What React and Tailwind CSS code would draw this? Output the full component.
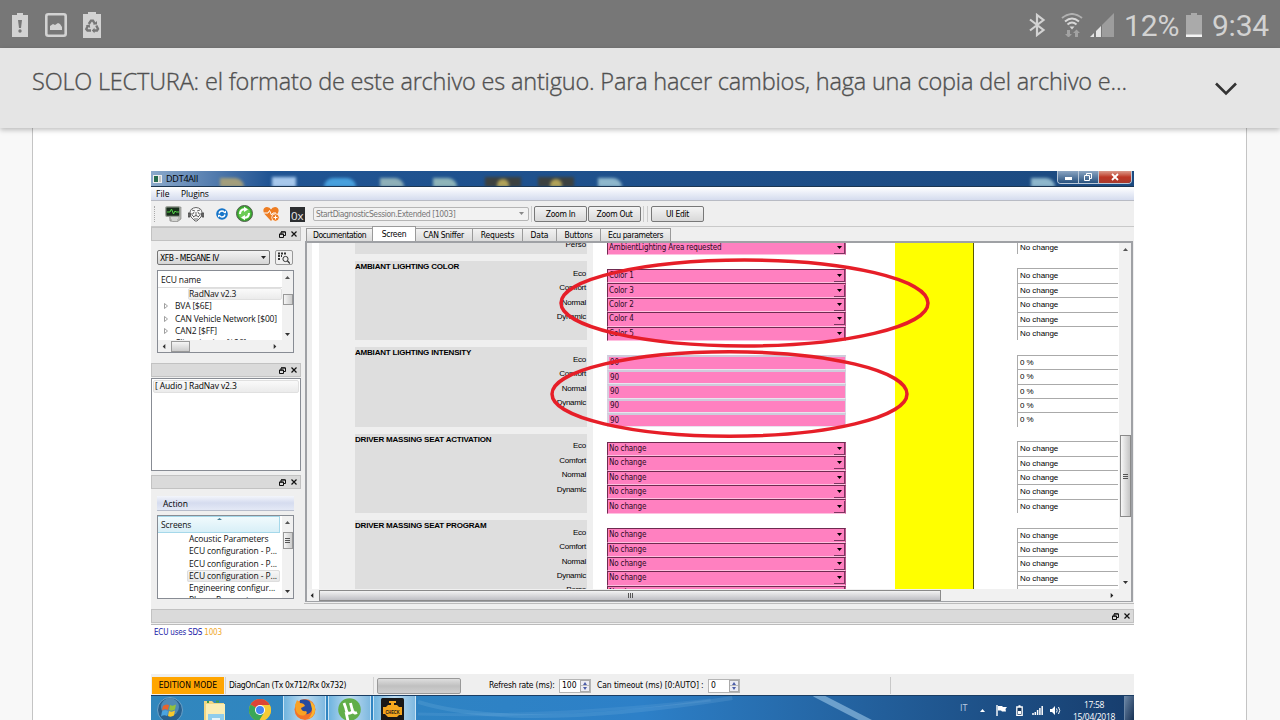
import clsx from 'clsx';

const TAHOMA = "font-['DejaVu_Sans_Condensed','DejaVu_Sans',sans-serif]";
const SEGOE = "font-['Open_Sans','Noto_Sans',sans-serif]";
const ARIAL = "font-['Liberation_Sans',Arial,sans-serif]";

const tabs = [
  { name: 'Documentation', box: 'w-[65px]', text: 'tracking-[-0.450px] pr-[2px]' },
  { name: 'Screen', box: 'w-[42px]', text: 'tracking-[-0.3px] pr-[2px]', active: true },
  { name: 'CAN Sniffer', box: 'w-[55px]', text: 'tracking-[-0.3px] pr-[3px]' },
  { name: 'Requests', box: 'w-[49px]', text: 'tracking-[-0.2px] pr-[2px]' },
  { name: 'Data', box: 'w-[33px]', text: 'tracking-[-0.1px] pr-[2px]' },
  { name: 'Buttons', box: 'w-[43px]', text: 'tracking-[-0.2px] pr-[2px]' },
  { name: 'Ecu parameters', box: 'w-[69px]', text: 'tracking-[-0.4px] pr-[2px]' },
];

const modes = ['Eco', 'Comfort', 'Normal', 'Dynamic'];

const groups = [
  {
    title: 'AMBIANT LIGHTING COLOR',
    combo: true,
    values: ['Color 1', 'Color 3', 'Color 2', 'Color 4', 'Color 5'],
    current: 'No change',
  },
  {
    title: 'AMBIANT LIGHTING INTENSITY',
    values: ['90', '90', '90', '90', '90'],
    current: '0 %',
  },
  {
    title: 'DRIVER MASSING SEAT ACTIVATION',
    combo: true,
    values: Array(5).fill('No change'),
    current: 'No change',
  },
  {
    title: 'DRIVER MASSING SEAT PROGRAM',
    combo: true,
    values: Array(5).fill('No change'),
    current: 'No change',
    extra: 'Perso',
  },
];

const ecus = ['BVA [$6E]', 'CAN Vehicle Network [$00]', 'CAN2 [$FF]', 'Climatisation [$26]'];

const screens = [
  'Acoustic Parameters',
  'ECU configuration - P...',
  'ECU configuration - P...',
  'ECU configuration - P...',
  'Engineering configur...',
  'Phone Parameters',
];

function Arrow({ dir = 'down', className = 'w-[5px] h-[3px] text-[#222]' }) {
  const d = {
    down: 'M0 0H6L3 4Z',
    up: 'M0 4H6L3 0Z',
    left: 'M5 0V4L1 2Z',
    right: 'M1 0V4L5 2Z',
  }[dir];
  return (
    <svg viewBox="0 0 6 4" preserveAspectRatio="none" className={clsx('shrink-0', className)}>
      <path d={d} fill="currentColor" />
    </svg>
  );
}

function StatusBar() {
  return (
    <div className="h-12 shrink-0 bg-[#777] flex items-center text-[#d2d2d2]">
      <svg className="ml-3 mt-[2px] w-4 h-6" viewBox="0 0 16 24">
        <path d="M5 0h6v2h5v22H0V2h5Z" fill="#d2d2d2" />
        <path d="M6 7h4l-1 8H7Z" fill="#777" />
        <circle cx="8" cy="18" r="1.7" fill="#777" />
      </svg>
      <svg className="ml-[17px] mt-[2px] w-[22px] h-6" viewBox="0 0 22 24">
        <rect x="1.3" y="1.3" width="19.4" height="21.4" rx="2" fill="none" stroke="#d2d2d2" strokeWidth="2.6" />
        <path d="M5 17v-4l3-2 2 1 3-2 2 1 2 3v3Z" fill="#d2d2d2" />
      </svg>
      <svg className="ml-4 mt-[2px] w-[18px] h-[26px]" viewBox="0 0 18 26">
        <path d="M5 0h8v2h5v24H0V2h5Z" fill="#d2d2d2" />
        <g fill="none" stroke="#777" strokeWidth="2.4">
          <path d="M5.8 12 8 8.6h2L12 12" />
          <path d="M13.3 13.5 15 17l-1 1.500h-3.500" />
          <path d="M8 18.500H4.500L3.300 17l1.700-3.500" />
        </g>
        <path d="M10 12.500h4V9ZM11.500 15.700v5.500L8.800 18.500ZM2.700 13.200l4-.8.500 3.500Z" fill="#777" />
      </svg>
      <div className="ml-auto flex items-center pr-[11px]">
        <svg className="mt-[2px] w-[18px] h-6" viewBox="0 0 18 24" fill="none" stroke="#d2d2d2" strokeWidth="2.200">
          <path d="M2 6.500 15.500 17 9 22V2l6.500 5L2 17.500" />
        </svg>
        <svg className="ml-[15px] mt-[2px] w-[22px] h-6" viewBox="0 0 22 24" fill="none" strokeWidth="2">
          <path d="M1 5Q11-3 21 5" stroke="#b0b0b0" />
          <path d="M4 8.500Q11 2.500 18 8.500" stroke="#d8d8d8" />
          <path d="M6.500 11.500Q11 7.500 15.500 11.500" stroke="#d8d8d8" />
          <path d="M8.500 13.500h5L11 16.500Z" fill="#d8d8d8" stroke="none" />
          <path d="M6 17h3v4h2l-3.500 3.500L4 21h2ZM14 24h3v-4h2l-3.500-3.500L12 20h2Z" fill="#a2a2a2" stroke="none" />
        </svg>
        <svg className="ml-[7px] mt-[2px] w-6 h-6" viewBox="0 0 24 24">
          <path d="M24 0v24H12V12Z" fill="#9d9d9d" />
          <path d="M0 24h4v-4ZM6 24h5V13L6 18Z" fill="#e4e4e4" />
        </svg>
        <span className="ml-[10px] w-[56px] font-[Roboto,sans-serif] text-[30px] leading-[48px] tracking-[-0.1px] whitespace-nowrap mt-1">
          12%
        </span>
        <svg className="ml-[6px] mt-[2px] w-4 h-6" viewBox="0 0 16 24">
          <path d="M5 0h6v2h5v22H0V2h5Z" fill="#aaa" />
          <path d="M0 21.500h16V24H0Z" fill="#f4f4f4" />
        </svg>
        <span className="ml-[10px] font-[Roboto,sans-serif] text-[30px] leading-[48px] tracking-[-0.2px] mt-1">9:34</span>
      </div>
    </div>
  );
}

function Banner() {
  return (
    <div className="relative z-10 h-20 shrink-0 bg-[#e5e5e5] shadow-[0_2px_5px_rgba(0,0,0,0.25)] flex">
      <p className="ml-8 mt-4 w-[1100px] font-['Open_Sans','Noto_Sans',sans-serif] font-light text-[23.500px] leading-[34px] tracking-[-0.185px] text-[#505050] [-webkit-text-stroke:0.35px_#505050] whitespace-nowrap">
        SOLO LECTURA: el formato de este archivo es antiguo. Para hacer cambios, haga una copia del archivo e...
      </p>
      <svg className="ml-[82px] mt-[33px] w-6 h-4" viewBox="0 0 24 16" fill="none" stroke="#333" strokeWidth="2.600">
        <path d="m2 2.500 10 10 10-10" />
      </svg>
    </div>
  );
}

function TitleBar() {
  return (
    <div className="h-[15px] shrink-0 overflow-hidden flex items-start bg-linear-to-r from-[#8ba9cb] via-[#205493] via-12% to-[#1c4a80]">
      <svg className="mt-1 ml-[2px] w-[9px] h-2 shrink-0" viewBox="0 0 9 8">
        <path d="M0 0h9v8H0Z" fill="#eee" />
        <path d="M1 1h4v6H1Z" fill="#256b4e" />
        <path d="M6 2h2M6 4h2M6 6h2" stroke="#999" />
      </svg>
      <span className={clsx(SEGOE, 'ml-1 mt-[2px] w-[60px] text-[9px] leading-3 tracking-[-0.2px] text-black')}>DDT4All</span>
      <div className="-ml-[6px] flex h-4 items-end blur-[1.500px]">
        <div className="w-6 h-[9px] bg-[#a39e7b] rounded-tr-xl" />
        <div className="ml-7 w-6 h-[10px] bg-[#a7c8ec]" />
        <div className="ml-7 w-8 h-[9px] rounded-t-full bg-[#48a0dd]" />
        <div className="ml-6 w-6 h-[9px] rounded-tr-xl bg-[#8eb0b9]" />
        <div className="ml-[29px] w-6 h-[9px] rounded-tr-xl bg-[#8eb4b9]" />
        <div className="ml-[28px] w-9 h-[10px] bg-[#3c4140] flex justify-center items-end">
          <div className="w-3 h-2 rounded-t-full bg-[#b1a257]" />
        </div>
        <div className="ml-[17px] w-9 h-[10px] bg-[#3c4140] flex justify-center items-end">
          <div className="w-3 h-2 rounded-t-full bg-[#b1a257]" />
        </div>
        <div className="ml-6 w-6 h-[9px] rounded-tr-xl bg-[#8eb7cc]" />
        <div className="ml-[409px] w-6 h-[9px] rounded-tr-xl bg-[#8eb7cc]" />
      </div>
      <div className="ml-auto mr-[2px] flex h-[13px] border border-t-0 border-[#b9c8d8] rounded-b-sm overflow-hidden">
        <div className="w-5 bg-linear-to-b from-[#8ba5c2] to-[#28527f] flex justify-center items-end pb-[3px]">
          <div className="w-[7px] h-[3px] bg-white" />
        </div>
        <div className="w-5 border-l border-[#b9c8d8] bg-linear-to-b from-[#8ba5c2] to-[#28527f] flex justify-center items-center">
          <svg className="w-[9px] h-[9px]" viewBox="0 0 9 9" fill="none" stroke="#fff">
            <path d="M.5 2.500h5v5h-5ZM2.500 2V.5h5v5H6" />
          </svg>
        </div>
        <div className="w-[33px] border-l border-[#b9c8d8] bg-linear-to-b from-[#d99a8c] via-[#bd3726] to-[#a93a2c] flex justify-center items-center">
          <svg className="w-2 h-2" viewBox="0 0 8 8" stroke="#fff" strokeWidth="1.800">
            <path d="m1 1 6 6M7 1 1 7" />
          </svg>
        </div>
      </div>
    </div>
  );
}

function MenuBar() {
  return (
    <div
      className={clsx(
        SEGOE,
        'h-[15px] shrink-0 flex items-center border-t border-t-[#1b3551] border-b border-b-[#b8bbc4] bg-linear-to-b from-white via-[#e9edf7] to-[#d5dcee] text-[8.500px] leading-3 text-black'
      )}
    >
      <span className="ml-[5px] w-[25px]">File</span>
      <span className="tracking-[-0.1px]">Plugins</span>
    </div>
  );
}

function ToolButton({ children, className }) {
  return (
    <div
      className={clsx(
        TAHOMA,
        'h-4 flex items-center justify-center rounded-[2px] border border-[#787878] bg-linear-to-b from-[#f4f4f4] to-[#d8d8d8] text-[8.500px] leading-3 tracking-[-0.3px] whitespace-nowrap',
        className
      )}
    >
      {children}
    </div>
  );
}

function Toolbar() {
  return (
    <div className="h-[26px] shrink-0 flex items-center bg-[#efefef] border-b border-[#c9c9c9]">
      <div className="ml-[3px] h-4 border-l border-dotted border-[#aaa]" />
      <svg className="ml-[10px] w-[17px] h-4 shrink-0" viewBox="0 0 17 16">
        <path d="M4 3 16 1v12l-4 3-7-1Z" fill="#b9bab5" stroke="#777" strokeWidth=".6" />
        <rect x=".8" y=".8" width="14" height="9.500" rx="1" fill="#182e1b" stroke="#9aa097" strokeWidth="1.200" />
        <path d="M2 6h3l1.500-3L8.500 8l1.500-3 1 1h3" fill="none" stroke="#55d548" />
        <path d="M6 12h7M7 14h5" stroke="#eee" />
      </svg>
      <svg className="ml-[6px] w-4 h-4 shrink-0" viewBox="0 0 16 16" fill="none" stroke="#444" strokeWidth=".8">
        <path d="M2 7Q2 2 8 1.500q6 .5 6 5.500l-1 4-4 4H7l-4-4Z" fill="#f8f8f8" />
        <path d="M1 8h4l1-2M15 8h-4l-1-2M4 4l3 1M12 4 9 5M5 11q3-3 6 0M6 13h4M8 6v4M4 9l2 2M12 9l-2 2" />
        <path d="M0 7h2v4H0ZM14 7h2v4h-2Z" fill="#777" />
      </svg>
      <svg className="ml-[12px] w-3 h-3 shrink-0" viewBox="0 0 12 12">
        <circle cx="6" cy="6" r="5.800" fill="#1675c9" />
        <path d="M3 5.500q.5-2.500 3-2.500 1.500 0 2.200 1M9 6.500Q8.500 9 6 9q-1.500 0-2.200-1" fill="none" stroke="#fff" strokeWidth="1.300" />
        <path d="m7 5 3 .3V2.500ZM5 7l-3-.3v2.800Z" fill="#fff" />
      </svg>
      <svg className="ml-2 w-[17px] h-[17px] shrink-0" viewBox="0 0 17 17">
        <circle cx="8.500" cy="8.500" r="8" fill="#39a72e" stroke="#555d52" />
        <circle cx="8.500" cy="8.500" r="6" fill="#6ccc55" />
        <path d="M4 9q0-4.500 4.500-4.800M13 8q0 4.500-4.500 4.800" fill="none" stroke="#fff" strokeWidth="2" />
        <path d="m8 1.800 4 2.600L8 7ZM9 10v5.200l-4-2.600Z" fill="#fff" />
      </svg>
      <svg className="ml-[10px] w-[17px] h-4 shrink-0" viewBox="0 0 17 16">
        <path d="M8 15 1.500 8C-1 4 1 1 4 1q3 0 4 2.500Q9 1 12 1c3 0 5 3 2.500 7Z" fill="#ee7d22" />
        <path d="M1 7h4l1.500-2.500L8.500 9 10 7h3" fill="none" stroke="#fff" />
        <circle cx="12.500" cy="11.500" r="3.800" fill="#ee7d22" stroke="#fff" strokeWidth=".8" />
        <path d="M12.500 9.500v4M10.500 11.500h4" stroke="#fff" />
      </svg>
      <div className="ml-[10px] mt-[2px] w-[15px] h-[15px] shrink-0 overflow-hidden bg-[#2c2e30] text-[#e8e8e8] font-['Open_Sans',sans-serif] text-[11.500px] leading-[17px] pl-px">
        0x
      </div>
      <div className="ml-2 w-[216px] h-[14px] shrink-0 flex items-center justify-between rounded-[2px] border border-[#b5b5b5] bg-[#f2f2f2] pl-[2px] pr-1">
        <span className={clsx(TAHOMA, 'text-[8.500px] leading-3 tracking-[-0.410px] text-[#777] whitespace-nowrap')}>
          StartDiagnosticSession.Extended [1003]
        </span>
        <Arrow className="w-[5px] h-[3px] text-[#888]" />
      </div>
      <div className="ml-[2px] mr-[2px] h-4 border-l border-[#ccc]" />
      <ToolButton className="w-[53px]">Zoom In</ToolButton>
      <ToolButton className="ml-[1px] w-[53px]">Zoom Out</ToolButton>
      <div className="ml-[2px] w-[5px] h-4 border-x border-[#ccc]" />
      <ToolButton className="ml-[3px] w-[53px]">UI Edit</ToolButton>
    </div>
  );
}

function DockHeader({ className = 'pr-[3px]' }) {
  return (
    <div className={clsx('h-[14px] shrink-0 flex items-center justify-end gap-[5px] bg-[#dadada] border border-[#c2c2c2]', className)}>
      <svg className="w-[7px] h-[7px]" viewBox="0 0 7 7" fill="none" stroke="#111">
        <path d="M.5 3h4v3.500h-4ZM2 3V1h4.500v3.500H5M2 .8h4.500M.5 3.200h4" />
      </svg>
      <svg className="w-[6px] h-[6px]" viewBox="0 0 6 6" stroke="#111" strokeWidth="1.200">
        <path d="m.5.5 5 5M5.500.5l-5 5" />
      </svg>
    </div>
  );
}

function EcuTree() {
  return (
    <div className="ml-[6px] mt-[5px] w-[137px] h-[83px] shrink-0 border border-[#888c94] bg-white flex flex-col">
      <div className="flex flex-1 min-h-0">
        <div
          className={clsx(
            SEGOE,
            'flex-1 min-w-0 overflow-hidden text-[8.500px] leading-[12.300px] tracking-[-0.16px] text-[#111] whitespace-nowrap'
          )}
        >
          <div className="h-[17px] pl-[3px] leading-[17px] border-b border-[#ddd]">ECU name</div>
          <div className="ml-[30px] h-[12.300px] rounded-[2px] border border-[#e0e0e0] bg-linear-to-b from-[#fafafa] to-[#ebebeb] leading-[10px]">
            RadNav v2.3
          </div>
          {ecus.map((name) => (
            <div key={name} className="flex items-center h-[12.300px]">
              <svg className="ml-[6px] mr-[7px] w-1 h-[6px]" viewBox="0 0 4 6" fill="none" stroke="#888" strokeWidth=".8">
                <path d="M.5.5v5L3.500 3Z" />
              </svg>
              {name}
            </div>
          ))}
        </div>
        <div className="w-[11px] bg-[#f1f1f1] flex flex-col items-center">
          <Arrow dir="up" className="mt-[5px] w-[5px] h-[3px] text-[#555]" />
          <div className="mt-[15px] w-[10px] h-[11px] border border-[#999] bg-linear-to-r from-[#f5f5f5] to-[#ccc]" />
          <Arrow className="mt-auto mb-1 w-[5px] h-[3px] text-[#333]" />
        </div>
      </div>
      <div className="h-3 shrink-0 flex items-center bg-[#f1f1f1]">
        <Arrow dir="left" className="ml-1 w-1 h-[5px] text-[#333]" />
        <div className="ml-[5px] w-[19px] h-[11px] border border-[#999] bg-linear-to-b from-[#f5f5f5] to-[#ccc]" />
        <Arrow dir="right" className="ml-auto mr-4 w-1 h-[5px] text-[#333]" />
      </div>
    </div>
  );
}

function ScreenList() {
  return (
    <div className="ml-[6px] mt-1 w-[137px] h-[84px] shrink-0 border border-[#888c94] bg-white flex">
      <div
        className={clsx(
          SEGOE,
          'flex-1 min-w-0 overflow-hidden text-[8.500px] leading-[12.300px] tracking-[-0.1px] text-[#111] whitespace-nowrap'
        )}
      >
        <div className="relative h-[17px] mr-[2px] pl-[3px] leading-[16px] border border-l-0 border-[#a5d8ea] bg-linear-to-b from-[#f0fafd] to-[#d8eff7]">
          Screens
          <Arrow dir="up" className="absolute left-[59px] top-px w-[5px] h-[2px] text-[#4a7f96]" />
        </div>
        {screens.map((name, i) => (
          <div
            key={i}
            className={clsx(
              'ml-[29px] mr-[2px] h-[12.300px] pl-[2px]',
              i === 3 && 'rounded-[2px] bg-linear-to-b from-[#f8f8f8] to-[#e5e5e5] outline outline-[#ddd] -outline-offset-1'
            )}
          >
            {name}
          </div>
        ))}
      </div>
      <div className="w-[11px] bg-[#f1f1f1] flex flex-col items-center">
        <Arrow dir="up" className="mt-[5px] w-[5px] h-[3px] text-[#555]" />
        <div className="mt-2 w-[10px] h-[17px] border border-[#999] bg-linear-to-r from-[#f5f5f5] to-[#ccc] flex flex-col justify-center items-center gap-px">
          <div className="w-[5px] h-px bg-[#555]" />
          <div className="w-[5px] h-px bg-[#555]" />
          <div className="w-[5px] h-px bg-[#555]" />
        </div>
        <Arrow className="mt-auto mb-[5px] w-[5px] h-[3px] text-[#333]" />
      </div>
    </div>
  );
}

function LeftDocks() {
  return (
    <div className="w-[150px] shrink-0 flex flex-col">
      <DockHeader />
      <div className="mt-[9px] ml-[6px] flex items-center">
        <div className="w-[113px] h-[15px] flex items-center justify-between rounded-[2px] border border-[#777] bg-linear-to-b from-[#f3f3f3] to-[#d5d5d5] pl-[2px] pr-[3px]">
          <span className={clsx(TAHOMA, 'text-[8.500px] leading-3 tracking-[-0.450px] whitespace-nowrap')}>XFB - MEGANE IV</span>
          <Arrow />
        </div>
        <div className="ml-[5px] w-[18px] h-[15px] rounded-[2px] border border-[#999] bg-[#f0f0f0] flex items-center justify-center">
          <svg className="w-3 h-3" viewBox="0 0 12 12" fill="none" stroke="#333">
            <path d="M0 1.500h8M0 4h4M0 7h3" strokeDasharray="2 1" strokeWidth="1.800" />
            <circle cx="7.500" cy="7" r="2.600" fill="#f0f0f0" />
            <path d="m9.500 9 2.500 2.500" strokeWidth="1.400" />
          </svg>
        </div>
      </div>
      <EcuTree />
      <DockHeader className="mt-[10px] pr-[3px]" />
      <div className="mt-px h-[93px] shrink-0 border border-[#888c94] bg-white p-px">
        <div
          className={clsx(
            SEGOE,
            'h-[13px] rounded-[2px] border border-[#e0e0e0] bg-linear-to-b from-[#fafafa] to-[#ebebeb] text-[8.500px] leading-[10px] tracking-[-0.12px] pl-px whitespace-nowrap'
          )}
        >
          [ Audio ] RadNav v2.3
        </div>
      </div>
      <DockHeader className="mt-[4px] pr-[3px]" />
      <div
        className={clsx(
          SEGOE,
          'ml-[6px] mt-[7px] w-[137px] h-[15px] shrink-0 bg-linear-to-b from-[#f3f5fb] via-[#d5dcef] to-[#e4e9f6] border-b border-[#b6bccb] text-[8.500px] leading-[15px] pl-[6px]'
        )}
      >
        Action
      </div>
      <ScreenList />
    </div>
  );
}

function Field({ value, combo }) {
  return (
    <div
      className={clsx(
        TAHOMA,
        'h-[14.400px] flex items-center bg-[#ff80c0] text-[8px] leading-3 tracking-[-0.15px] text-[#2c0b1e] pl-px whitespace-nowrap',
        combo
          ? 'border-t border-l border-t-[#6f2a50] border-l-[#6f2a50] border-b border-b-[#ffc0e0] border-r border-r-[#b95a8c]'
          : 'border-t-2 border-l-2 border-b border-r border-t-[#cfcbdb] border-l-[#d6d0df] border-b-[#e9e4ee] border-r-[#d9d3e0]'
      )}
    >
      {value}
      {combo && (
        <div className="ml-auto w-[11px] h-3 border-r border-b border-[#7d3560] flex items-center justify-center">
          <Arrow className="w-[5px] h-[3px] text-black" />
        </div>
      )}
    </div>
  );
}

function CurrentValue({ value }) {
  return (
    <div
      className={clsx(
        ARIAL,
        'h-[14.400px] border-t border-l border-[#aaa] bg-white text-[8px] leading-[14px] tracking-[-0.05px] text-black pl-[2px] whitespace-nowrap'
      )}
    >
      {value}
    </div>
  );
}

function Canvas() {
  return (
    <div className="flex-1 min-w-0 overflow-hidden flex bg-white">
      <div className="w-[5px] shrink-0 bg-[#efefef]" />
      <div className="ml-[7px] w-[274px] shrink-0 bg-[#efefef] pl-9 pr-[6px]">
        <div className={clsx(ARIAL, 'h-[10.900px] bg-[#dedede] text-right text-[8px] leading-[4px] tracking-[-0.1px] pr-px')}>Perso</div>
        {groups.map((g) => (
          <div key={g.title} className={clsx(ARIAL, 'mt-[7px] h-[79.400px] bg-[#dedede]')}>
            <div className="h-[5.800px] text-[8px] leading-[11px] font-bold tracking-[-0.2px] text-black whitespace-nowrap">{g.title}</div>
            <div className="flex flex-col items-end pr-px text-[8px] leading-[14.400px] tracking-[-0.25px] text-black">
              {modes.map((m) => (
                <span key={m}>{m}</span>
              ))}
              {g.extra && <span>{g.extra}</span>}
            </div>
          </div>
        ))}
      </div>
      <div className="ml-[14px] w-[239px] shrink-0 -mt-[2.700px]">
        <Field value="AmbientLighting Area requested" combo />
        {groups.map((g) => (
          <div key={g.title} className="mt-[14.400px]">
            {g.values.map((v, i) => (
              <Field key={i} value={v} combo={g.combo} />
            ))}
          </div>
        ))}
      </div>
      <div className="ml-[49px] w-[79px] shrink-0 bg-[#ffff00] border-r border-[#5a5a00]" />
      <div className="ml-[43px] w-[101px] shrink-0 -mt-[3.300px]">
        <CurrentValue value="No change" />
        {groups.map((g) => (
          <div key={g.title} className="mt-[14.400px]">
            {g.values.map((v, i) => (
              <CurrentValue key={i} value={g.current} />
            ))}
          </div>
        ))}
      </div>
    </div>
  );
}

function ScreenPanel() {
  return (
    <div className="ml-[4px] flex-1 min-w-0 flex flex-col">
      <div className={clsx(TAHOMA, 'ml-[1px] h-[14px] shrink-0 flex items-end text-[8.500px] leading-3')}>
        {tabs.map((t) => (
          <div
            key={t.name}
            className={clsx(
              'flex items-center justify-center border border-b-0 border-[#9a9a9a] -ml-px first:ml-0 whitespace-nowrap',
              t.active ? 'h-[15px] bg-white' : 'h-[13px] bg-linear-to-b from-[#f2f2f2] to-[#dcdcdc]',
              t.text
            )}
          >
            <div className={clsx('flex justify-center', t.box, '-mr-[2px]')}>{t.name}</div>
          </div>
        ))}
      </div>
      <div className="h-[361px] shrink-0 mr-[1px] border-2 border-b border-[#9fa1a5] bg-[#efefef] flex flex-col">
        <div className="flex-1 min-h-0 flex">
          <Canvas />
          <div className="w-3 shrink-0 bg-[#f1f1f1] flex flex-col items-center">
            <Arrow dir="up" className="mt-[5px] w-[5px] h-[3px] text-[#555]" />
            <div className="mt-[184px] w-[11px] h-[82px] border border-[#8a8a8a] bg-linear-to-r from-[#f7f7f7] to-[#c4c4c4] flex flex-col items-center justify-center gap-px">
              <div className="w-[5px] h-px bg-[#555]" />
              <div className="w-[5px] h-px bg-[#555]" />
              <div className="w-[5px] h-px bg-[#555]" />
            </div>
            <Arrow className="mt-auto mb-[5px] w-[5px] h-[3px] text-[#333]" />
          </div>
        </div>
        <div className="h-3 shrink-0 flex items-center bg-[#f1f1f1]">
          <Arrow dir="left" className="ml-[3px] w-1 h-[5px] text-[#222]" />
          <div className="ml-[5px] w-[622px] h-[11px] border border-[#8a8a8a] bg-linear-to-b from-[#f3f3f3] to-[#bfbfc4] flex items-center justify-center gap-px">
            <div className="h-[5px] w-px bg-[#555]" />
            <div className="h-[5px] w-px bg-[#555]" />
            <div className="h-[5px] w-px bg-[#555]" />
          </div>
          <Arrow dir="right" className="ml-auto mr-[17px] w-1 h-[5px] text-[#222]" />
        </div>
      </div>
      <div className="mt-px h-px -ml-px bg-[#bcbcbc]" />
    </div>
  );
}

function SpinBox({ value, className }) {
  return (
    <div className={clsx('h-[14px] flex items-center border border-[#b5b5b5] bg-white pl-[2px]', className)}>
      {value}
      <div className="ml-auto w-[10px] h-3 border border-[#aaa] bg-[#ececf2] flex flex-col items-center justify-between py-px">
        <Arrow dir="up" className="w-1 h-[3px] text-[#4c5da8]" />
        <div className="w-full h-px bg-[#bbb]" />
        <Arrow className="w-1 h-[3px] text-[#4c5da8]" />
      </div>
    </div>
  );
}

function BottomBar() {
  return (
    <div className={clsx(TAHOMA, 'h-[21px] shrink-0 bg-[#efefef] flex items-center pt-[2px] text-[8.500px] text-black whitespace-nowrap')}>
      <div className="ml-[1px] w-[72px] h-[17px] bg-[#ffa500] flex items-center justify-center tracking-[0.1px]">EDITION MODE</div>
      <div className="ml-px w-[149px] h-[17px] border-x border-[#d2d2d2] pl-[3px] leading-[17px] tracking-[-0.310px]">
        DiagOnCan (Tx 0x712/Rx 0x732)
      </div>
      <div className="ml-[3px] w-[84px] h-4 border border-[#999] rounded-[2px] bg-linear-to-b from-[#dedede] via-[#c0c0c0] to-[#cfcfcf]" />
      <span className="ml-[28px] w-[70px] tracking-[-0.2px]">Refresh rate (ms):</span>
      <SpinBox value="100" className="w-[32px]" />
      <span className="ml-[6px] w-[110px] tracking-[-0.1px]">Can timeout (ms) [0:AUTO] :</span>
      <SpinBox value="0" className="ml-[1px] w-[32px]" />
      <div className="ml-[150px] w-px h-[17px] bg-[#c8c8c8]" />
    </div>
  );
}

function TaskButton({ children }) {
  return (
    <div className="w-[43px] mr-[2px] h-full border-x border-[#c9e4f5] bg-linear-to-r from-[#6fb4df] via-[#bddcf0] to-[#7fb9e0] flex justify-center pt-[2px]">
      {children}
    </div>
  );
}

function TaskBar() {
  return (
    <div className="h-[25px] shrink-0 overflow-hidden flex items-start border-t border-[#1a3d63] bg-linear-to-r from-[#3187bd] via-[#2d80c8] via-50% to-[#173d6d]">
      <svg className="ml-[6px] mt-px w-[26px] h-[26px] shrink-0" viewBox="0 0 26 26">
        <circle cx="13" cy="13" r="12.500" fill="#28608f" stroke="#6ba2c8" />
        <circle cx="13" cy="10" r="9" fill="#5f9cc4" opacity=".7" />
        <path d="M6 9q3-2.500 6-1l-1 5q-3-1.500-6 .5Z" fill="#e8632b" />
        <path d="M13 8q3 1.500 6-.5l-1 5q-3 2-6 .5Z" fill="#93c13d" />
        <path d="M5 14.500q3-2 6-.5l-1 5q-3-1.500-6 .5Z" fill="#4ba4e0" />
        <path d="M12 14q3 1.500 6-.5l-1 5q-3 2-6 .5Z" fill="#f8c92d" />
      </svg>
      <svg className="ml-5 mt-1 w-6 h-6 shrink-0" viewBox="0 0 24 24">
        <path d="M1 1h8l2 2h10v20H1Z" fill="#f1d684" />
        <path d="M3 4h19v19H3Z" fill="#faedb5" />
        <path d="M4 2h2M13 1.500h3" stroke="#3d9d49" strokeWidth="2" />
        <path d="M5 14h16v10H5Z" fill="#8fcdec" />
        <path d="M9 18h8v6H9Z" fill="#e5f4fa" />
      </svg>
      <svg className="ml-[22px] mt-[3px] w-[22px] h-[22px] shrink-0" viewBox="0 0 22 22">
        <circle cx="11" cy="11" r="11" fill="#e3b72a" />
        <path d="M11 11 1.500 5.500A11 11 0 0 1 20.500 5.500Z" fill="#dc4437" />
        <path d="M1.500 5.500A11 11 0 0 0 10 22l5-8-4-3Z" fill="#3aa757" />
        <path d="M11 6h9.700A11 11 0 0 1 10 22l5-8Z" fill="#f5cb36" />
        <circle cx="11" cy="11" r="5" fill="#fff" />
        <circle cx="11" cy="11" r="4" fill="#4285f4" />
      </svg>
      <div className="ml-[12px] h-full flex">
        <TaskButton>
          <svg className="w-[22px] h-[22px]" viewBox="0 0 22 22">
            <circle cx="11" cy="11.500" r="10.500" fill="#f3742a" />
            <path d="M6 2q9-2 12 5 1 7-4 9-7 1-8-4Z" fill="#264a9f" />
            <path d="M1 7 3 2l3 3q4 0 5 3l-4 2q1 4 5 3 2 2-1 4-6 2-9-4Z" fill="#f9a224" />
            <path d="M16 3q6 4 5 10-1 6-7 8 5-5 4-10Z" fill="#fbb52e" />
          </svg>
        </TaskButton>
        <TaskButton>
          <svg className="w-[23px] h-[23px]" viewBox="0 0 23 23">
            <circle cx="11.500" cy="11.500" r="11.300" fill="#60ae49" />
            <path d="M6 5q2 5 2.500 8 1 3 4 2 3-1 1.500-4L12.500 5M15 13q1 3 4 1.500M8 14l2 9" fill="none" stroke="#fff" strokeWidth="2.800" />
          </svg>
        </TaskButton>
        <TaskButton>
          <svg className="w-[23px] h-[23px] -ml-[5px]" viewBox="0 0 23 23">
            <rect width="23" height="23" rx="1.500" fill="#191817" />
            <path d="M8 3h7v2h-2v2h3l2 2h3v8h-3l-2 2H7l-3-3H2V9h3l2-2h3V5H8Z" fill="#f3a61e" />
            <text x="4.500" y="15.500" fontSize="5.500" fontWeight="bold" fontFamily="Liberation Sans" textLength="14" lengthAdjust="spacingAndGlyphs" fill="#191817">CHECK</text>
          </svg>
        </TaskButton>
      </div>
      <svg className="flex-1 min-w-0 h-[25px]" viewBox="0 0 500 25" preserveAspectRatio="none" fill="none" stroke="#b5dcf5">
        <path d="M0 6q90 30 290-4" strokeWidth="4" opacity=".12" />
        <path d="M0 18q120 4 270-14" strokeWidth="3" opacity=".1" />
        <path d="m366-2 52 29" strokeWidth="6" opacity=".5" />
      </svg>
      <div className="flex items-start text-white">
        <span className={clsx(SEGOE, 'mt-[6px] w-[20px] text-[9px] leading-3 text-[#b9cde2]')}>IT</span>
        <Arrow dir="up" className="mt-[13px] w-[5px] h-[3px] text-white" />
        <svg className="ml-[11px] mt-[9px] w-[11px] h-[11px]" viewBox="0 0 11 11">
          <path d="M1 0v11" stroke="#fff" strokeWidth="1.400" />
          <path d="M2 1h4l1 1h4L9.500 4l.5 2.500H6L5 5.500H2Z" fill="#fff" />
        </svg>
        <svg className="ml-[9px] mt-[9px] w-[7px] h-[11px]" viewBox="0 0 7 11">
          <path d="M.8 2h5.400v8.300H.8ZM2.500 1h2" fill="#17375e" stroke="#fff" strokeWidth="1.300" />
          <path d="M2 6h3v3H2Z" fill="#fff" />
        </svg>
        <svg className="ml-[9px] mt-[9px] w-[11px] h-[10px]" viewBox="0 0 11 10" stroke="#fff" strokeWidth="1.500">
          <path d="M1 10V8M3.300 10V7M5.600 10V5M7.900 10V3M10.200 10V1" />
        </svg>
        <svg className="ml-[7px] mt-[9px] w-[11px] h-[11px]" viewBox="0 0 11 11" fill="none" stroke="#fff">
          <path d="M0 4h2l3-3v9L2 7H0Z" fill="#fff" stroke="none" />
          <path d="M6.500 3.500q1.300 2 0 4M8.500 2q2.500 3.500 0 7" />
        </svg>
        <div className={clsx(SEGOE, 'ml-[9px] w-[48px] text-center text-[8.500px] leading-[11.500px] tracking-[-0.3px] mt-[3px] whitespace-nowrap')}>
          17:58
          <br />
          15/04/2018
        </div>
        <div className="ml-[6px] w-[10px] h-[25px] border-l border-[#6b86a5] bg-linear-to-br from-[#6b86a5] to-[#152f52]" />
      </div>
    </div>
  );
}

function Highlights() {
  return (
    <svg className="absolute left-[395px] top-[84px] w-[390px] h-[188px] pointer-events-none" viewBox="546 255 390 188" fill="none" stroke="#e61e28" strokeWidth="3.500">
      <ellipse cx="744.500" cy="303" rx="183.500" ry="43" />
      <ellipse cx="729.500" cy="394" rx="177.500" ry="42.200" />
    </svg>
  );
}

export default function App() {
  return (
    <div className="w-[1280px] h-[720px] overflow-hidden flex flex-col bg-[#f8f8f8]">
      <StatusBar />
      <Banner />
      <div className="flex-1 min-h-0 ml-8 w-[1215px] border-x border-[#c4c4c4] bg-white">
        <div className="relative ml-[118px] mt-[43px] w-[983px] h-[549px] bg-[#efefef] flex flex-col overflow-hidden">
          <TitleBar />
          <MenuBar />
          <Toolbar />
          <div className="h-[381px] shrink-0 flex">
            <LeftDocks />
            <ScreenPanel />
          </div>
          <DockHeader className="mt-px pr-[3px]" />
          <div
            className={clsx(
              TAHOMA,
              'mt-px h-[50px] shrink-0 bg-white border-t border-[#bbb] pl-[3px] pt-[2px] text-[8px] leading-3 tracking-[-0.2px] text-[#1c1ca8]'
            )}
          >
            ECU uses SDS <span className="text-[#f0a92c]">1003</span>
          </div>
          <BottomBar />
          <TaskBar />
          <Highlights />
        </div>
      </div>
    </div>
  );
}
